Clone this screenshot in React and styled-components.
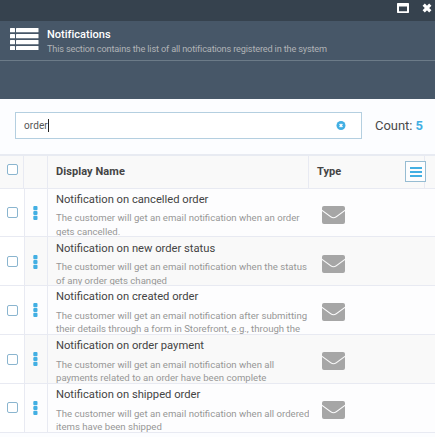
import React from "react";
import styled, { createGlobalStyle } from "styled-components";

const GlobalStyle = createGlobalStyle`
  *, *::before, *::after { box-sizing: border-box; }
  body { margin: 0; background: #fdfdfe; font-family: Roboto, sans-serif; overflow: hidden; }
`;

const Panel = styled.main`
  width: 435px;
  height: 437px;
  overflow: hidden;
  background: #fcfdff;
`;

const TitleBar = styled.div`
  display: flex;
  justify-content: flex-end;
  align-items: flex-start;
  gap: 13px;
  height: 21px;
  padding: 3px 3px 0 0;
  background: #36424e;
`;

const Header = styled.header`
  display: flex;
  align-items: flex-start;
  height: 40px;
  padding: 7px 0 0 10px;
  gap: 8px;
  background: #475768;
  border-bottom: 1px solid #6c7b88;
`;

const Heading = styled.h1`
  margin: 0;
  font-size: 11px;
  line-height: 14px;
  font-weight: 500;
  letter-spacing: 0.02px;
  color: #fff;
  white-space: nowrap;
`;

const Subtitle = styled.p`
  margin: 0;
  font-size: 9.2px;
  line-height: 14px;
  letter-spacing: -0.17px;
  color: #b0b3b6;
  white-space: nowrap;
`;

const ActionBar = styled.div`
  height: 38px;
  background: #475768;
`;

const SearchBar = styled.div`
  display: flex;
  height: 55px;
  padding: 13px 0 0 15px;
  gap: 13px;
`;

const SearchField = styled.div`
  display: flex;
  align-items: center;
  width: 347px;
  height: 27px;
  padding: 0 15px 0 8px;
  background: #fff;
  border: 1px solid #b4cfe0;
  font-size: 10px;
  letter-spacing: 0.1px;
  color: #555;
`;

const Caret = styled.span`
  width: 1px;
  height: 13px;
  background: #222;
  margin-right: auto;
`;

const Count = styled.div`
  font-size: 13px;
  line-height: 27px;
  letter-spacing: -0.05px;
  color: #4a4a4a;
  white-space: nowrap;
  b { color: #42afe3; font-weight: 700; }
`;

const HeadRow = styled.div`
  display: grid;
  grid-template-columns: 24px 24px 261px 116px 10px;
  height: 35px;
  background: #f9f9f9;
  border-top: 2px solid #e8ebf2;
  border-bottom: 1px solid #e8eaf2;
`;

const HeadCell = styled.div`
  display: flex;
  align-items: center;
  padding: 0 0 ${(p) => p.$bottom || 0}px ${(p) => p.$pad || 0}px;
  border-right: 1px solid #e8eaf2;
  font-size: 11px;
  font-weight: 700;
  letter-spacing: 0.08px;
  color: #444;
  white-space: nowrap;
  &:last-child { border-right: 0; }
`;

const MenuButton = styled.button`
  display: grid;
  place-items: center;
  width: 21px;
  height: 21px;
  flex: none;
  margin: 0 -2px 0 auto;
  padding: 0;
  background: #fcfdfe;
  border: 1px solid #96bcd2;
`;

const Row = styled.div`
  display: grid;
  grid-template-columns: 25px 23px 261px 126px;
  height: ${(p) => p.$height}px;
  background: ${(p) => (p.$shaded ? "#f9f9f9" : "#fdfdfe")};
  border-bottom: 1px solid #e8eaf2;
`;

const Cell = styled.div`
  display: flex;
  align-items: flex-start;
  padding: ${(p) => p.$top || 0}px 0 0 ${(p) => p.$pad || 0}px;
  overflow: hidden;
  border-right: ${(p) => (p.$divided ? "1px solid #e8eaf2" : "0")};
  background: ${(p) => (p.$plain ? "#fff" : "transparent")};
`;

const TextCell = styled.div`
  padding: ${(p) => p.$top}px 0 0 8px;
  overflow: hidden;
`;

const Checkbox = styled.span`
  width: 11px;
  height: 11px;
  border: 1px solid #8ab5cf;
  border-radius: 2px;
  background: #fff;
`;

const Name = styled.div`
  font-size: 11.2px;
  line-height: 15px;
  color: #444;
  white-space: nowrap;
`;

const Description = styled.div`
  margin-top: ${(p) => (p.$loose ? 3.5 : 5)}px;
  font-size: 9.6px;
  line-height: ${(p) => (p.$loose ? 14 : 13)}px;
  color: #979797;
  white-space: pre;
`;

const ListIcon = () => (
  <svg width="29" height="22" viewBox="0 0 29 22" fill="#fff">
    {[0, 6, 12, 18].map((y) => (
      <g key={y}>
        <rect x="0" y={y} width="5" height="4.2" rx=".5" />
        <rect x="6" y={y} width="22.5" height="4.2" rx=".5" />
      </g>
    ))}
  </svg>
);

const WindowIcon = () => (
  <svg width="12" height="10" viewBox="0 0 12 10">
    <path fill="#fff" fillRule="evenodd" d="M.7 0h10.6q.7 0 .7.7v8.6q0 .7-.7.7H.7Q0 10 0 9.300V.7Q0 0 .7 0ZM2 3.600v4.700h8V3.600Z" />
  </svg>
);

const CloseIcon = () => (
  <svg width="10" height="10" viewBox="0 0 10 10">
    <path d="M1.700 1.700 8.300 8.300M8.300 1.700 1.700 8.300" stroke="#fff" strokeWidth="3.200" />
  </svg>
);

const ClearIcon = () => (
  <svg width="10" height="10" viewBox="0 0 10 10">
    <circle cx="5" cy="4.500" r="4.500" fill="#42afe3" />
    <path d="m3.600 3.100 2.800 2.800m0-2.800-2.800 2.800" stroke="#fff" strokeWidth="1.400" />
  </svg>
);

const BarsIcon = () => (
  <svg width="12" height="10" viewBox="0 0 12 10" fill="#42afe3">
    <rect y="0" width="12" height="2" />
    <rect y="4" width="12" height="2" />
    <rect y="8" width="12" height="2" />
  </svg>
);

const DotsIcon = () => (
  <svg width="5" height="14" viewBox="0 0 5 14" fill="#42afe3">
    <rect x=".3" width="4.200" height="4.200" rx="1" />
    <rect x=".3" y="4.900" width="4.200" height="4.200" rx="1" />
    <rect x=".3" y="9.800" width="4.200" height="4.200" rx="1" />
  </svg>
);

const MailIcon = () => (
  <svg width="23" height="18" viewBox="0 0 23 18" fill="#a6a6a6">
    <path d="M2 0h19q2 0 2 2v1.800l-9 6.500q-2.500 1.800-5 0L0 3.800V2Q0 0 2 0Z" />
    <path d="m0 5 8.500 6.300q3 2 6 0L23 5v11q0 2-2 2H2q-2 0-2-2Z" />
  </svg>
);

const rows = [
  { name: "Notification on cancelled order", text: "The customer will get an email notification when an order\ngets cancelled.", height: 48, top: 3, check: 18, icon: 17, loose: true },
  { name: "Notification on new order status", text: "The customer will get an email notification when the status\nof any order gets changed", height: 49, top: 4, check: 19, icon: 18, loose: true },
  { name: "Notification on created order", text: "The customer will get an email notification after submitting\ntheir details through a form in Storefront, e.g., through the", height: 49, top: 3, check: 19, icon: 17 },
  { name: "Notification on order payment", text: "The customer will get an email notification when all\npayments related to an order have been complete", height: 49, top: 3, check: 19, icon: 17 },
  { name: "Notification on shipped order", text: "The customer will get an email notification when all ordered\nitems have been shipped", height: 49, top: 3, check: 18, icon: 17 },
];

export default function App() {
  return (
    <Panel>
      <GlobalStyle />
      <TitleBar><WindowIcon /><CloseIcon /></TitleBar>
      <Header>
        <ListIcon />
        <div>
          <Heading>Notifications</Heading>
          <Subtitle>This section contains the list of all notifications registered in the system</Subtitle>
        </div>
      </Header>
      <ActionBar />
      <SearchBar>
        <SearchField>order<Caret /><ClearIcon /></SearchField>
        <Count>Count: <b>5</b></Count>
      </SearchBar>
      <HeadRow>
        <HeadCell $pad={7} $bottom={5}><Checkbox /></HeadCell>
        <HeadCell />
        <HeadCell $pad={8} $bottom={1}>Display Name</HeadCell>
        <HeadCell $pad={8} $bottom={1}>Type<MenuButton aria-label="Columns"><BarsIcon /></MenuButton></HeadCell>
        <HeadCell />
      </HeadRow>
      {rows.map((row, i) => (
        <Row key={row.name} $height={row.height} $shaded={i % 2 === 1}>
          <Cell $pad={7} $divided $plain $top={row.check}><Checkbox /></Cell>
          <Cell $pad={8} $divided $top={row.icon}><DotsIcon /></Cell>
          <TextCell $top={row.top}>
            <Name>{row.name}</Name>
            <Description $loose={row.loose}>{row.text}</Description>
          </TextCell>
          <Cell $pad={13} $top={row.icon}><MailIcon /></Cell>
        </Row>
      ))}
    </Panel>
  );
}
